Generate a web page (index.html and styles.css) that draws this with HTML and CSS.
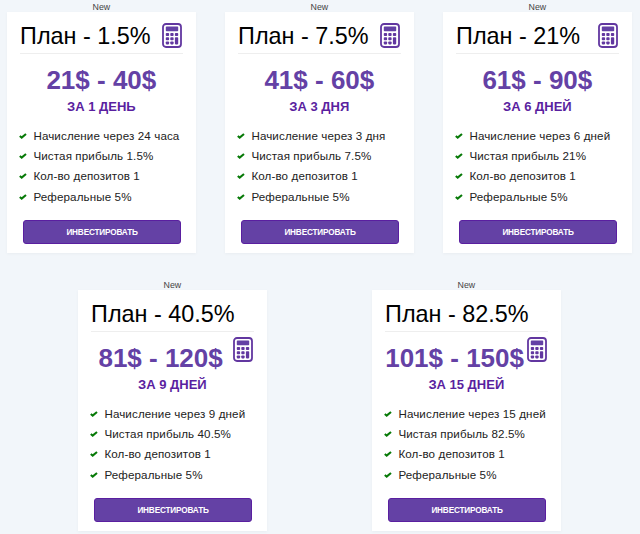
FILE: index.html
```
<!DOCTYPE html>
<html lang="ru">
<head>
    <meta charset="UTF-8">
    <meta name="viewport" content="width=device-width, initial-scale=1.0">
    <title>Инвестиционные планы</title>
    <link rel="stylesheet" href="styles.css">
</head>
<body>
    <svg width="0" height="0" class="sprite">
        <symbol id="calc" viewBox="0 0 20 25">
            <rect x="1" y="1" width="18" height="23" rx="3" fill="#fff" stroke="#6237a0" stroke-width="1.8"/>
            <rect x="3.8" y="3.6" width="12.4" height="4.6" rx="0.8" fill="#6441a5"/>
            <g fill="#6237a0">
                <rect x="3.8" y="10" width="3.3" height="3" rx="0.8"/>
                <rect x="8.3" y="10" width="3.3" height="3" rx="0.8"/>
                <rect x="12.9" y="10" width="3.3" height="3" rx="0.8"/>
                <rect x="3.8" y="14.2" width="3.3" height="3" rx="0.8"/>
                <rect x="8.3" y="14.2" width="3.3" height="3" rx="0.8"/>
                <rect x="3.8" y="18.4" width="3.3" height="3" rx="0.8"/>
                <rect x="8.3" y="18.4" width="3.3" height="3" rx="0.8"/>
                <rect x="12.9" y="14.2" width="3.3" height="7.2" rx="0.8"/>
            </g>
        </symbol>
        <symbol id="check" viewBox="0 0 8 6">
            <path d="M0.8 3 L2.7 4.6 L7 1" fill="none" stroke="#087a08" stroke-width="2.1"/>
        </symbol>
    </svg>

    <div class="plans">
        <div class="plan">
            <div class="plan-label">New</div>
            <div class="card">
                <div class="card-header">
                    <h2>План - 1.5%</h2>
                    <svg class="calc"><use href="#calc"/></svg>
                </div>
                <div class="price">21$ - 40$</div>
                <div class="term">ЗА 1 ДЕНЬ</div>
                <ul class="features">
                    <li><svg class="check"><use href="#check"/></svg>Начисление через 24 часа</li>
                    <li><svg class="check"><use href="#check"/></svg>Чистая прибыль 1.5%</li>
                    <li><svg class="check"><use href="#check"/></svg>Кол-во депозитов 1</li>
                    <li><svg class="check"><use href="#check"/></svg>Реферальные 5%</li>
                </ul>
                <button class="btn">ИНВЕСТИРОВАТЬ</button>
            </div>
        </div>

        <div class="plan">
            <div class="plan-label">New</div>
            <div class="card">
                <div class="card-header">
                    <h2>План - 7.5%</h2>
                    <svg class="calc"><use href="#calc"/></svg>
                </div>
                <div class="price">41$ - 60$</div>
                <div class="term">ЗА 3 ДНЯ</div>
                <ul class="features">
                    <li><svg class="check"><use href="#check"/></svg>Начисление через 3 дня</li>
                    <li><svg class="check"><use href="#check"/></svg>Чистая прибыль 7.5%</li>
                    <li><svg class="check"><use href="#check"/></svg>Кол-во депозитов 1</li>
                    <li><svg class="check"><use href="#check"/></svg>Реферальные 5%</li>
                </ul>
                <button class="btn">ИНВЕСТИРОВАТЬ</button>
            </div>
        </div>

        <div class="plan">
            <div class="plan-label">New</div>
            <div class="card">
                <div class="card-header">
                    <h2>План - 21%</h2>
                    <svg class="calc"><use href="#calc"/></svg>
                </div>
                <div class="price">61$ - 90$</div>
                <div class="term">ЗА 6 ДНЕЙ</div>
                <ul class="features">
                    <li><svg class="check"><use href="#check"/></svg>Начисление через 6 дней</li>
                    <li><svg class="check"><use href="#check"/></svg>Чистая прибыль 21%</li>
                    <li><svg class="check"><use href="#check"/></svg>Кол-во депозитов 1</li>
                    <li><svg class="check"><use href="#check"/></svg>Реферальные 5%</li>
                </ul>
                <button class="btn">ИНВЕСТИРОВАТЬ</button>
            </div>
        </div>
    </div>

    <div class="plans plans-wide">
        <div class="plan">
            <div class="plan-label">New</div>
            <div class="card">
                <div class="card-header">
                    <h2>План - 40.5%</h2>
                </div>
                <div class="price"><span>81$ - 120$</span><svg class="calc"><use href="#calc"/></svg></div>
                <div class="term">ЗА 9 ДНЕЙ</div>
                <ul class="features">
                    <li><svg class="check"><use href="#check"/></svg>Начисление через 9 дней</li>
                    <li><svg class="check"><use href="#check"/></svg>Чистая прибыль 40.5%</li>
                    <li><svg class="check"><use href="#check"/></svg>Кол-во депозитов 1</li>
                    <li><svg class="check"><use href="#check"/></svg>Реферальные 5%</li>
                </ul>
                <button class="btn">ИНВЕСТИРОВАТЬ</button>
            </div>
        </div>

        <div class="plan">
            <div class="plan-label">New</div>
            <div class="card">
                <div class="card-header">
                    <h2>План - 82.5%</h2>
                </div>
                <div class="price"><span>101$ - 150$</span><svg class="calc"><use href="#calc"/></svg></div>
                <div class="term">ЗА 15 ДНЕЙ</div>
                <ul class="features">
                    <li><svg class="check"><use href="#check"/></svg>Начисление через 15 дней</li>
                    <li><svg class="check"><use href="#check"/></svg>Чистая прибыль 82.5%</li>
                    <li><svg class="check"><use href="#check"/></svg>Кол-во депозитов 1</li>
                    <li><svg class="check"><use href="#check"/></svg>Реферальные 5%</li>
                </ul>
                <button class="btn">ИНВЕСТИРОВАТЬ</button>
            </div>
        </div>
    </div>
</body>
</html>
```
FILE: styles.css
```
:root {
    --primary-color: #6441a5;
    --dark-color: #5a1fa0;
}

* {
    box-sizing: border-box;
}

body {
    margin: 0;
    height: 534px;
    overflow: hidden;
    background-color: #f2f6fa;
    font-family: "Liberation Sans", Arial, sans-serif;
    color: #222;
}

.sprite {
    display: block;
}

.plans {
    display: flex;
    gap: 28.5px;
    padding-left: 6.6px;
}

.plans-wide {
    gap: 104.5px;
    padding-left: 77.6px;
    margin-top: 25px;
}

.plan {
    width: 189.5px;
}

.plan-label {
    height: 12px;
    line-height: 15px;
    font-size: 8.8px;
    text-align: center;
    color: #444;
}

.card {
    height: 241px;
    padding: 0 13px;
    background: white;
    box-shadow: 0 1px 3px rgba(0, 0, 0, 0.04);
}

.card-header {
    display: flex;
    justify-content: space-between;
    align-items: center;
    height: 42px;
    border-bottom: 1px solid #eee;
}

.card-header h2 {
    margin: 0;
    padding: 6px 0 0 0.5px;
    font-size: 23.4px;
    font-weight: normal;
    line-height: 28px;
    color: #000;
    white-space: nowrap;
}

.calc {
    flex: none;
    width: 20px;
    height: 25px;
    margin: 6px 1.5px 0 0;
}

.price {
    height: 44px;
    padding-top: 11px;
    line-height: 30px;
    font-size: 26px;
    font-weight: bold;
    text-align: center;
    white-space: nowrap;
    color: var(--primary-color);
}

.plans-wide .price {
    display: flex;
}

.plans-wide .price span {
    flex: 1;
    min-width: 0;
    margin-left: -2px;
}

.plans-wide .calc {
    margin-top: -6px;
}

.term {
    height: 27px;
    line-height: 18px;
    font-size: 13px;
    font-weight: bold;
    text-align: center;
    color: var(--dark-color);
}

.features {
    margin: 0;
    padding: 0;
    list-style: none;
}

.features li {
    display: flex;
    align-items: center;
    height: 20.3px;
    font-size: 11.6px;
    letter-spacing: 0.12px;
    white-space: nowrap;
}

.check {
    width: 8px;
    height: 6px;
    margin: 1px 6px 0 -0.2px;
}

.btn {
    display: block;
    width: 158px;
    height: 24px;
    margin: 14px 0 0 3.5px;
    padding: 0;
    border: 1px solid var(--dark-color);
    border-radius: 3px;
    background: var(--primary-color);
    font-family: inherit;
    font-size: 8.2px;
    font-weight: bold;
    letter-spacing: -0.15px;
    color: white;
}
```
